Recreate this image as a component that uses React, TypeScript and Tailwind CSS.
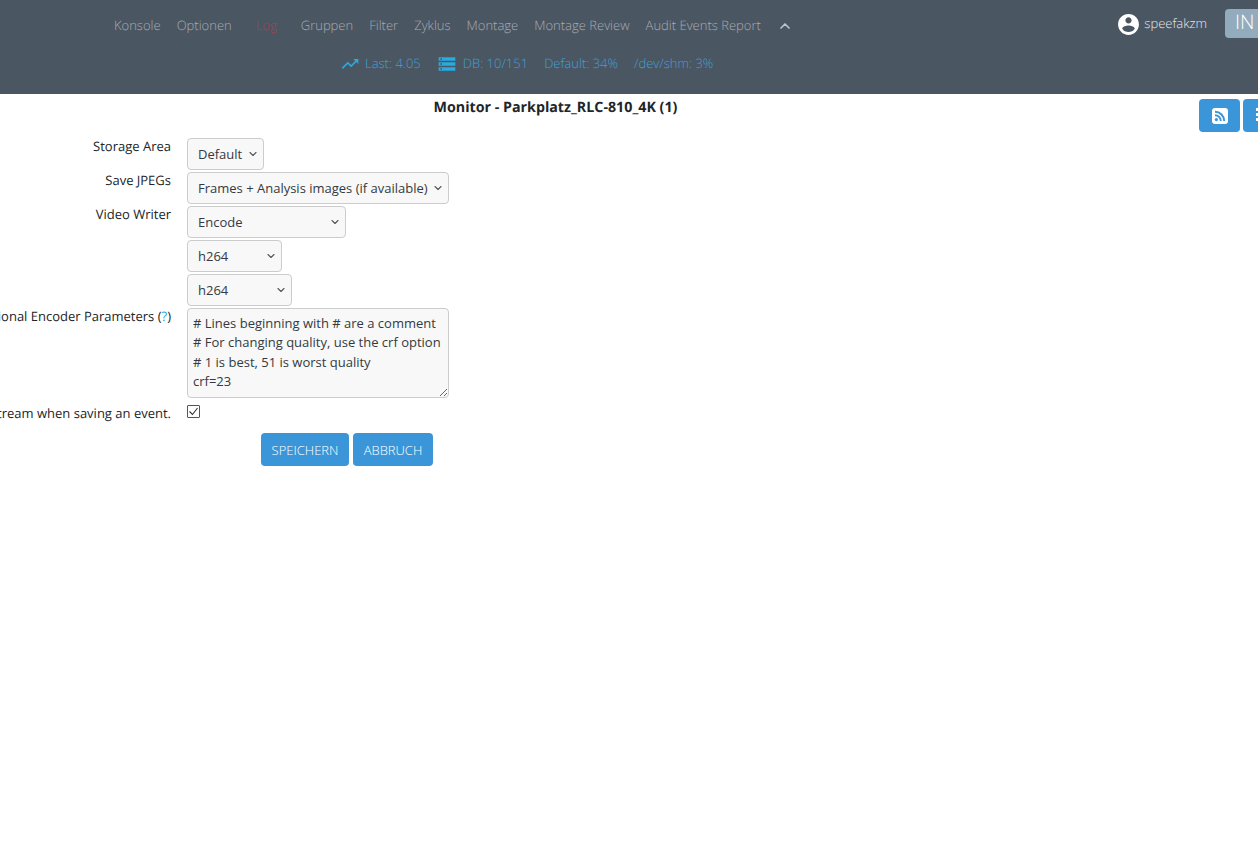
import { ChevronDown, ChevronUp } from 'lucide-react';

const navItems = ['Konsole', 'Optionen', 'Log', 'Gruppen', 'Filter', 'Zyklus', 'Montage', 'Montage Review', 'Audit Events Report'];

function StatusIcon({ kind }: { kind: 'load' | 'db' }) {
  return (
    <svg width="20" height="20" viewBox="0 0 24 24" fill="#29abe0">
      {kind === 'load' ? (
        <path d="M16 6l2.29 2.29-4.88 4.88-4-4L2 16.59 3.41 18l6-6 4 4 6.3-6.29L22 12V6z" />
      ) : (
        <path d="M2 20h20v-4H2v4zm2-3h2v2H4v-2zM2 4v4h20V4H2zm4 3H4V5h2v2zm-4 7h20v-4H2v4zm2-3h2v2H4v-2z" />
      )}
    </svg>
  );
}

function Row({ label, children }: { label?: React.ReactNode; children: React.ReactNode }) {
  return (
    <div className="flex">
      <div className="flex w-[171px] justify-end whitespace-nowrap leading-4">{label}</div>
      <div className="mb-[2px] ml-4">{children}</div>
    </div>
  );
}

function Select({ options, width }: { options: string[]; width: string }) {
  return (
    <div className={`${width} relative`}>
      <select className="block h-8 w-full appearance-none rounded border border-[#ccc] bg-[#f8f8f8] pl-[10px] pt-[1px] text-[13px] text-[#343a40]">
        {options.map(o => <option key={o}>{o}</option>)}
      </select>
      <ChevronDown size={12} strokeWidth={2.2} className="pointer-events-none absolute right-[5px] top-[10px] text-[#555]" />
    </div>
  );
}

export default function App() {
  return (
    <div className="min-h-[867px] overflow-hidden bg-white font-['Open_Sans',sans-serif] text-[13px] text-[#212529] [text-rendering:geometricPrecision]">
      {/* Header */}
      <div className="relative h-[94px] bg-[#4b5663]">
        <div className="flex h-[51px] items-center pl-[114px] font-light text-[#a8abb0]">
          {navItems.map(item => (
            <span key={item} className={item === 'Log' ? 'ml-2 mr-6 text-[#b03a4e]' : 'mr-4'}>{item}</span>
          ))}
          <ChevronUp size={16} strokeWidth={2.5} className="text-[#c0c4c8]" />
        </div>
        <div className="flex h-[26px] items-center pl-[340px] font-light text-[#3fa0d4]">
          <StatusIcon kind="load" />
          <span className="ml-[5px]">Last: 4.05</span>
          <span className="ml-4"><StatusIcon kind="db" /></span>
          <span className="ml-[6px]">DB: 10/151</span>
          <span className="ml-4">Default: 34%</span>
          <span className="ml-4">/dev/shm: 3%</span>
        </div>

        <div className="absolute right-0 top-[9px] flex items-center">
          <svg width="25" height="25" viewBox="0 0 24 24" fill="#fff" className="mt-[1px]">
            <path d="M12 2C6.48 2 2 6.48 2 12s4.48 10 10 10 10-4.48 10-10S17.52 2 12 2zm0 3c1.66 0 3 1.34 3 3s-1.34 3-3 3-3-1.34-3-3 1.34-3 3-3zm0 14.2c-2.5 0-4.71-1.28-6-3.22.03-1.99 4-3.08 6-3.08 1.99 0 5.97 1.09 6 3.08-1.29 1.94-3.5 3.22-6 3.22z" />
          </svg>
          <span className="ml-[3px] mr-[18px] font-light text-[#e4e6e8]">speefakzm</span>
          <div className="flex h-[29px] w-[33px] items-center overflow-hidden rounded-l-[4px] bg-[#93acbd] pb-[3px] pl-[10px] text-[20px] font-light text-white">IN</div>
        </div>
      </div>

      {/* Page title + action buttons */}
      <div className="relative">
        <h2 className="w-[1111px] pt-[1px] text-center text-[14.25px] font-bold leading-[26px]">Monitor - Parkplatz_RLC-810_4K (1)</h2>
        <div className="absolute left-[1199px] top-[5px] flex w-[80px] gap-[3px]">
          <button className="flex h-[33px] w-[41px] shrink-0 items-center justify-center rounded-[4px] bg-[#3a96d8]">
            <svg width="16" height="16" viewBox="0 0 16 16">
              <rect width="16" height="16" rx="3" fill="#fff" />
              <circle cx="4.4" cy="11.6" r="1.6" fill="#3a96d8" />
              <path d="M3 7.2a5.8 5.8 0 0 1 5.8 5.8M3 3.8a9.2 9.2 0 0 1 9.2 9.2" fill="none" stroke="#3a96d8" strokeWidth="2" />
            </svg>
          </button>
          <button className="flex h-[33px] w-[41px] shrink-0 flex-col items-start gap-[2px] rounded-[4px] bg-[#3a96d8] pl-[13px] pt-[9px]">
            <span className="h-[3px] w-[3px] bg-white" />
            <span className="h-[3px] w-[3px] bg-white" />
            <span className="h-[3px] w-[3px] bg-white" />
          </button>
        </div>
      </div>

      {/* Storage form */}
      <div className="pt-[17px]">
        <Row label="Storage Area"><Select options={['Default']} width="w-[77px]" /></Row>
        <Row label="Save JPEGs"><Select options={['Frames + Analysis images (if available)']} width="w-[262px]" /></Row>
        <Row label="Video Writer"><Select options={['Encode']} width="w-[159px]" /></Row>
        <Row><Select options={['h264']} width="w-[95px]" /></Row>
        <Row><Select options={['h264']} width="w-[105px]" /></Row>
        <Row label={<span>Optional Encoder Parameters (<span className="text-[#29abe0]">?</span>)</span>}>
          <textarea
            className="block h-[90px] w-[262px] rounded border border-[#ccc] bg-[#f8f8f8] px-[5px] py-[5px] text-[13px] leading-[19.4px] text-[#343a40]"
            defaultValue={'# Lines beginning with # are a comment\n# For changing quality, use the crf option\n# 1 is best, 51 is worst quality\ncrf=23'}
          />
        </Row>
        <div className="flex pt-[5px]">
          <div className="flex w-[171px] justify-end whitespace-nowrap leading-4">Whether to store the audio stream when saving an event.</div>
          <div className="ml-4">
            <div className="flex h-[13px] w-[13px] items-center justify-center rounded-[1px] border border-[#555] bg-white">
              <svg width="11" height="11" viewBox="0 0 11 11"><path d="M1.5 5.5l3 3 5-6.5" fill="none" stroke="#333" strokeWidth="1.1" /></svg>
            </div>
          </div>
        </div>
        <div className="flex gap-1 pl-[261px] pt-[12px]">
          <button className="h-[33px] w-[88px] rounded-[4px] bg-[#3a96d8] pt-[2px] text-[13px] font-light text-white">SPEICHERN</button>
          <button className="h-[33px] w-[80px] rounded-[4px] bg-[#3a96d8] pt-[2px] text-[13px] font-light text-white">ABBRUCH</button>
        </div>
      </div>
    </div>
  );
}
